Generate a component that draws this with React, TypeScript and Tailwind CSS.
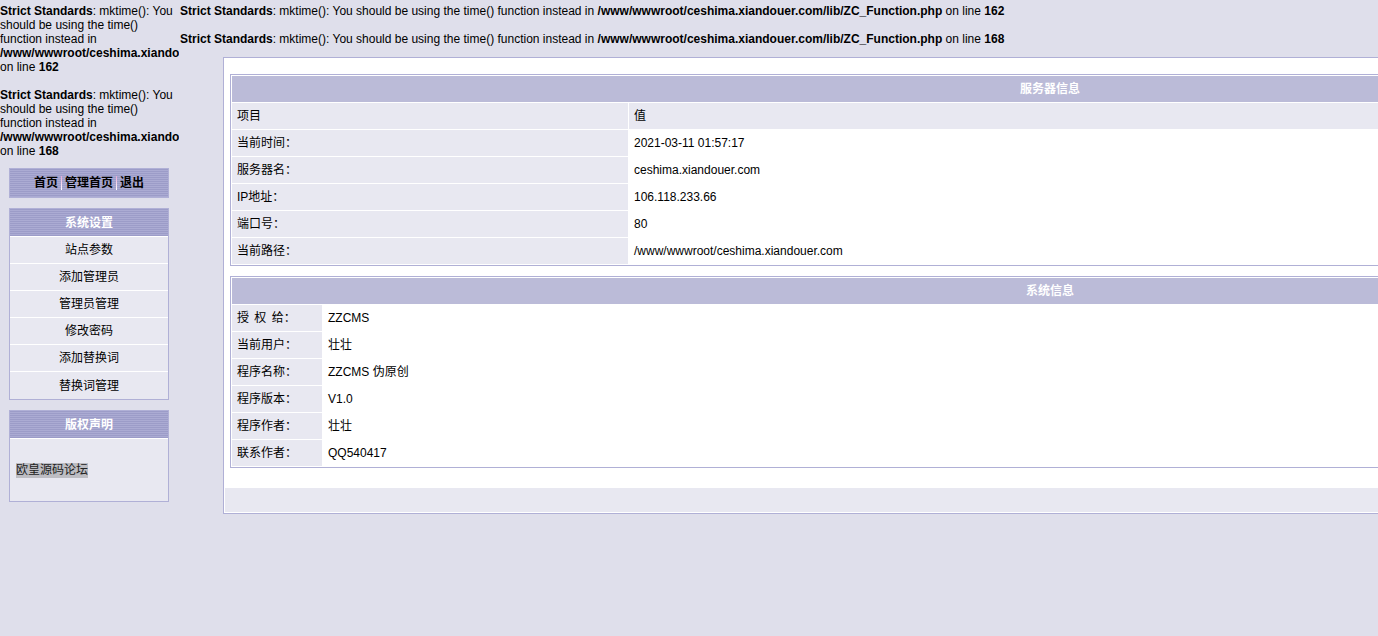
import React from "react";

const font = "font-['Liberation_Sans','Noto_Sans_CJK_SC',sans-serif]";

const serverRows: [string, string][] = [
  ["当前时间：", "2021-03-11 01:57:17"],
  ["服务器名：", "ceshima.xiandouer.com"],
  ["IP地址：", "106.118.233.66"],
  ["端口号：", "80"],
  ["当前路径：", "/www/wwwroot/ceshima.xiandouer.com"],
];

const systemRows: [string, string][] = [
  ["授 权 给：", "ZZCMS"],
  ["当前用户：", "壮壮"],
  ["程序名称：", "ZZCMS 伪原创"],
  ["程序版本：", "V1.0"],
  ["程序作者：", "壮壮"],
  ["联系作者：", "QQ540417"],
];

const menuItems = ["站点参数", "添加管理员", "管理员管理", "修改密码", "添加替换词", "替换词管理"];

const stripes =
  "bg-[repeating-linear-gradient(to_bottom,#9c9cc8_0px,#9c9cc8_1px,#ababd3_1px,#ababd3_2px)]";

function Warning({ line }: { line: number }) {
  return (
    <div>
      <b>Strict Standards</b>: mktime(): You should be using the time() function instead in{" "}
      <b>/www/wwwroot/ceshima.xiandouer.com/lib/ZC_Function.php</b> on line <b>{line}</b>
    </div>
  );
}

function Sep() {
  return <span className="inline-block w-px h-[14px] mx-[3px] align-middle bg-linear-to-b from-[#e6a6d6] to-white" />;
}

function MenuBox({ title, children }: { title: string; children: React.ReactNode }) {
  return (
    <div className="w-[160px] ml-[9px] border border-[#b0b0d6] bg-white">
      <div className={`h-[28px] flex items-center justify-center font-bold text-white border-b border-white ${stripes}`}>
        {title}
      </div>
      {children}
    </div>
  );
}

export default function App() {
  return (
    <div className={`min-h-screen overflow-hidden bg-[#dfdfeb] text-[12px] leading-[14px] text-black ${font}`}>
      <div className="flex items-start">
        {/* left column */}
        <div className="w-[179px] shrink-0 overflow-hidden pt-[4px]">
          <Warning line={162} />
          <div className="mt-[14px]">
            <Warning line={168} />
          </div>

          <div className={`mt-[10px] w-[160px] ml-[9px] h-[30px] border border-[#b0b0d6] flex items-center justify-center font-bold ${stripes}`}>
            <span>首页</span>
            <Sep />
            <span>管理首页</span>
            <Sep />
            <span>退出</span>
          </div>

          <div className="mt-[10px]">
            <MenuBox title="系统设置">
              {menuItems.map((item, i) => (
                <div
                  key={item}
                  className={`h-[27px] flex items-center justify-center bg-[#e8e8f1] ${i < menuItems.length - 1 ? "border-b border-white" : ""}`}
                >
                  {item}
                </div>
              ))}
            </MenuBox>
          </div>

          <div className="mt-[10px]">
            <MenuBox title="版权声明">
              <div className="h-[62px] flex items-center px-[6px] bg-[#e8e8f1]">
                <span className="bg-[#bdbdc3] text-[#222] leading-[15px]">欧皇源码论坛</span>
              </div>
            </MenuBox>
          </div>
        </div>

        {/* right column */}
        <div className="pl-[1px] pt-[4px]">
          <div className="whitespace-nowrap">
            <Warning line={162} />
            <div className="mt-[14px]">
              <Warning line={168} />
            </div>
          </div>

          <div className="mt-[11px] ml-[43px] w-[1654px] border border-[#b0b0d6] bg-white p-[1px]">
            <div className="px-[5px] pt-[15px] pb-[20px]">
              <table className="w-full border-separate border-spacing-[1px] border border-[#b0b0d6] bg-white">
                <tbody>
                  <tr>
                    <td colSpan={2} className="h-[26px] p-0 bg-[#bbbbd8] text-center font-bold text-white">
                      服务器信息
                    </td>
                  </tr>
                  <tr>
                    <td className="h-[26px] w-[396px] px-[5px] bg-[#e8e8f1]">项目</td>
                    <td className="h-[26px] px-[5px] bg-[#e8e8f1]">值</td>
                  </tr>
                  {serverRows.map(([k, v]) => (
                    <tr key={k}>
                      <td className="h-[26px] w-[396px] px-[5px] bg-[#e8e8f1]">{k}</td>
                      <td className="h-[26px] px-[5px] bg-white">{v}</td>
                    </tr>
                  ))}
                </tbody>
              </table>

              <table className="mt-[10px] w-full border-separate border-spacing-[1px] border border-[#b0b0d6] bg-white">
                <tbody>
                  <tr>
                    <td colSpan={2} className="h-[26px] p-0 bg-[#bbbbd8] text-center font-bold text-white">
                      系统信息
                    </td>
                  </tr>
                  {systemRows.map(([k, v]) => (
                    <tr key={k}>
                      <td className="h-[26px] w-[90px] px-[5px] bg-[#e8e8f1] whitespace-pre [word-spacing:2px]">{k}</td>
                      <td className="h-[26px] px-[5px] bg-white">{v}</td>
                    </tr>
                  ))}
                </tbody>
              </table>
            </div>
            <div className="h-[24px] bg-[#e8e8f1]" />
          </div>
        </div>
      </div>
    </div>
  );
}
